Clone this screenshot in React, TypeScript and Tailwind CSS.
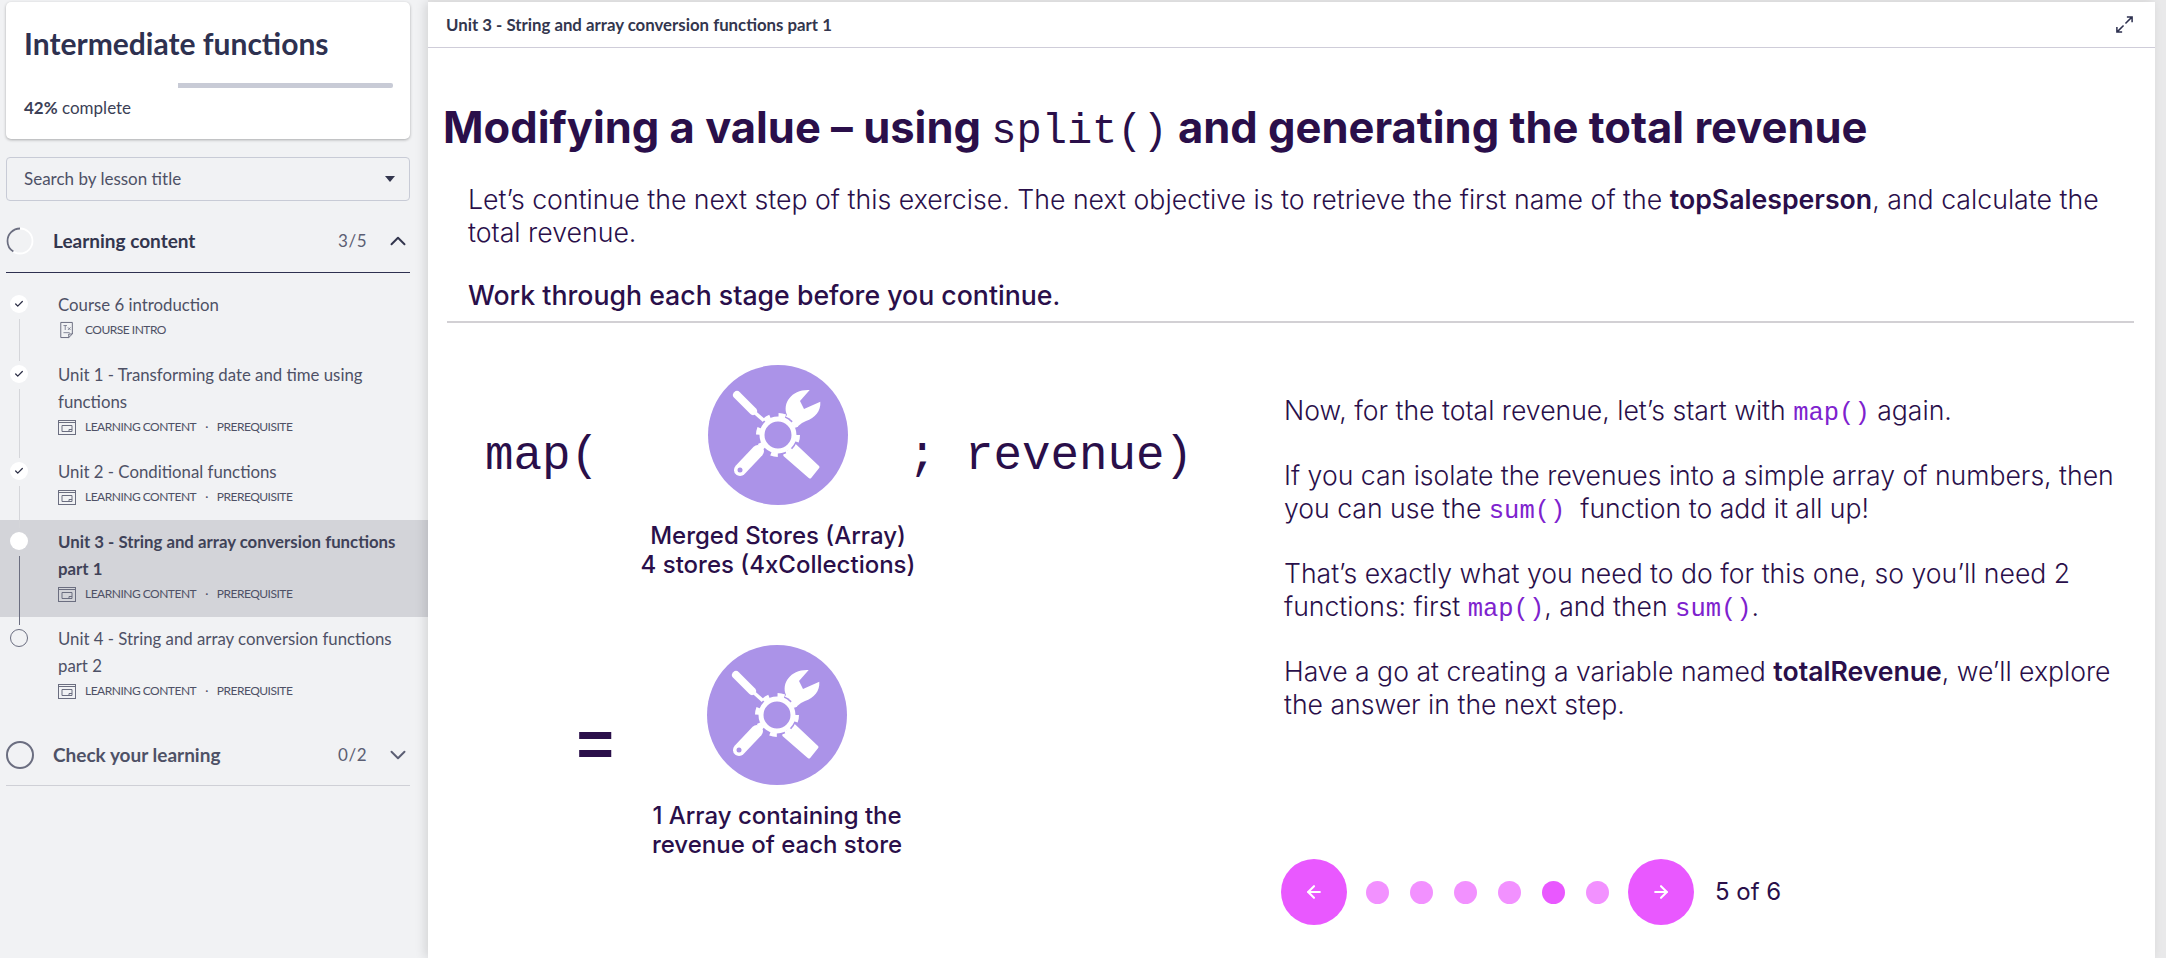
import { ArrowLeft, ArrowRight, ChevronDown, ChevronUp, Check } from "lucide-react";

const lessons = [
  { title: "Course 6 introduction", meta: "COURSE INTRO", state: "done", intro: true },
  { title: "Unit 1 - Transforming date and time using functions", meta: "LEARNING CONTENT", state: "done" },
  { title: "Unit 2 - Conditional functions", meta: "LEARNING CONTENT", state: "done" },
  { title: "Unit 3 - String and array conversion functions part 1", meta: "LEARNING CONTENT", state: "active" },
  { title: "Unit 4 - String and array conversion functions part 2", meta: "LEARNING CONTENT", state: "todo" },
];

const ToolsIcon = () => (
  <svg viewBox="0 0 140 140" className="w-[140px] h-[140px] shrink-0">
    <circle cx="70" cy="70" r="70" fill="#ab93e8" />
    {/* screwdriver */}
    <path d="M29 30 L45 46" stroke="#fff" strokeWidth="8" strokeLinecap="round" />
    <path d="M45 46 L62 61" stroke="#fff" strokeWidth="3.5" />
    {/* wrench head */}
    <path
      d="M101.7 25 L92 36 L96 44 L112.3 36.7 C113 46 107 53 98 56 L94 58 L84 66 L75 55 L79 50 C74 38 84 24 101.7 25Z"
      fill="#fff"
    />
    {/* handles */}
    <path d="M32 105 L50 86" stroke="#fff" strokeWidth="12" strokeLinecap="round" />
    <circle cx="32" cy="105" r="2.5" fill="#ab93e8" />
    <path d="M86.7 80 L110 102 L102 112 L76.7 90Z" fill="#fff" stroke="#fff" strokeWidth="3" strokeLinejoin="round" />
    {/* gear */}
    <circle cx="70" cy="70" r="20" fill="#ab93e8" />
    <circle cx="70" cy="70" r="16" fill="none" stroke="#fff" strokeWidth="5" />
    <circle cx="70" cy="70" r="20" fill="none" stroke="#fff" strokeWidth="4" strokeDasharray="7 8.7" />
  </svg>
);

const ContentIcon = ({ intro }: { intro?: boolean }) =>
  intro ? (
    <svg viewBox="0 0 18 20" className="w-[16px] h-[18px] text-[#5b5e73]" fill="none" stroke="currentColor" strokeWidth="1">
      <path d="M2 1.5h13v13l-4 4H2z" />
      <path d="M11 18.5v-4h4" />
      <path d="M5 5h4M7 5v5M10 7l3 3M13 7l-3 3M5 13h7" strokeWidth="0.8" />
    </svg>
  ) : (
    <svg viewBox="0 0 18 15" className="w-[18px] h-[15px] text-[#6b6e80]" fill="none" stroke="currentColor" strokeWidth="1">
      <rect x="0.5" y="0.5" width="17" height="14" />
      <path d="M0.5 2.5h17" />
      <path d="M4 5.5h10v6H4z" />
      <path d="M11 11.5v-2h3" />
    </svg>
  );

const LessonRow = ({ lesson, last }: { lesson: (typeof lessons)[number]; last: boolean }) => {
  const active = lesson.state === "active";
  return (
    <div className={`relative pl-[58px] pr-[8px] pt-[8px] pb-[11px] ${active ? "bg-[#d3d4d9]" : ""}`}>
      {lesson.state === "done" && (
        <span className="absolute left-[10px] top-[12px] w-[18px] h-[18px] rounded-full bg-white flex items-center justify-center">
          <Check className="w-[10px] h-[10px] text-[#2b2e45]" strokeWidth={3} />
        </span>
      )}
      {active && <span className="absolute left-[10px] top-[12px] w-[18px] h-[18px] rounded-full bg-white" />}
      {lesson.state === "todo" && (
        <span className="absolute left-[10px] top-[12px] w-[18px] h-[18px] rounded-full border border-[#6b6e80]" />
      )}
      {!last && (
        <span
          className={`absolute left-[18.5px] top-[36px] bottom-[-8px] w-px z-10 ${active ? "bg-[#6b6e80]" : "bg-[#d5d6da]"}`}
        />
      )}
      <div className={`text-[16.8px] leading-[27px] ${active ? "font-bold text-[#3f4258]" : "text-[#4e5166]"}`}>
        {lesson.title}
      </div>
      <div className="flex items-center gap-[9px] h-[24px] text-[12px] tracking-[-0.5px] text-[#4e5166]">
        <span className="w-[18px] flex justify-center">
          <ContentIcon intro={lesson.intro} />
        </span>
        <span>{lesson.meta}</span>
        {!lesson.intro && (
          <>
            <span>·</span>
            <span>PREREQUISITE</span>
          </>
        )}
      </div>
    </div>
  );
};

const Sidebar = () => (
  <aside className="w-[428px] shrink-0 h-full bg-[#f1f2f4] font-['Lato','Noto_Sans',sans-serif]">
    <div className="ml-[6px] mr-[18px] mt-[2px] h-[137px] bg-white rounded-[5px] shadow-[0_1px_3px_rgba(0,0,0,0.3)] px-[18px] pt-[22px]">
      <h1 className="text-[30px] leading-[38px] font-bold text-[#2e3150]">Intermediate functions</h1>
      <div className="mt-[21px] ml-[154px] mr-[-1px] h-[5px] bg-[#c8cbd6] rounded-r-[2px]" />
      <div className="mt-[8px] text-[17px] leading-[24px] text-[#3c3f56]">
        <span className="font-bold">42%</span> complete
      </div>
    </div>
    <div className="ml-[6px] mr-[18px] mt-[18px] h-[44px] border border-[#c8cbd6] rounded-[4px] flex items-center justify-between pl-[17px] pr-[14px] text-[17px] text-[#4e5166]">
      <span>Search by lesson title</span>
      <span className="w-0 h-0 border-x-[5px] border-x-transparent border-t-[6px] border-t-[#33364e]" />
    </div>
    <div className="ml-[6px] mr-[18px] mt-[9px] h-[63px] border-b border-[#2e3150] flex items-center text-[#33364e]">
      <svg viewBox="0 0 28 28" className="w-[28px] h-[28px] shrink-0 -rotate-90">
        <circle cx="14" cy="14" r="12.5" fill="none" stroke="#fff" strokeWidth="1.8" />
        <circle cx="14" cy="14" r="12.5" fill="none" stroke="#6b6e80" strokeWidth="1.8" strokeDasharray="33 79" strokeDashoffset="-46" />
      </svg>
      <span className="ml-[19px] text-[19px] font-bold flex-1">Learning content</span>
      <span className="text-[17px] text-[#5b5e73] mr-[18px] tracking-[0.5px]">3/5</span>
      <ChevronUp className="w-[26px] h-[26px] -mr-[1px] text-[#33364e]" strokeWidth={1.8} />
    </div>
    <div className="mt-[10px]">
      {lessons.map((lesson, i) => (
        <LessonRow key={lesson.title} lesson={lesson} last={i === lessons.length - 1} />
      ))}
    </div>
    <div className="ml-[6px] mr-[18px] mt-[11px] h-[61px] border-b border-[#cfd0d6] flex items-center text-[#4e5166]">
      <span className="w-[28px] h-[28px] shrink-0 rounded-full border-[2px] border-[#6b6e80]" />
      <span className="ml-[19px] text-[19px] font-bold flex-1">Check your learning</span>
      <span className="text-[17px] text-[#5b5e73] mr-[18px] tracking-[0.5px]">0/2</span>
      <ChevronDown className="w-[26px] h-[26px] -mr-[1px] text-[#5b5e73]" strokeWidth={1.8} />
    </div>
  </aside>
);

const Code = ({ children }: { children: string }) => (
  <code className="font-['Liberation_Mono',monospace] text-[25.5px] leading-none text-[#7e22ce]">{children}</code>
);

const Illustration = () => (
  <div className="w-[793px] shrink-0 pt-[42px]">
    <div className="flex items-start">
      <div className="w-[265px] pl-[42px] pt-[56px] font-['Liberation_Mono',monospace] text-[47.5px] leading-[70px] text-[#2a0f4a]">
        map(
      </div>
      <div className="w-[140px] flex flex-col items-center">
        <ToolsIcon />
        <p className="mt-[16px] text-center whitespace-nowrap text-[24px] leading-[29px] font-medium text-[#2a0f4a]">
          Merged Stores (Array)
          <br />4 stores (4xCollections)
        </p>
      </div>
      <div className="pl-[60px] pt-[56px] whitespace-nowrap font-['Liberation_Mono',monospace] text-[47.5px] leading-[70px] text-[#2a0f4a]">
        ; revenue)
      </div>
    </div>
    <div className="flex items-start mt-[66px]">
      <div className="w-[264px] pl-[133px] pt-[69px] font-['Liberation_Mono',monospace] font-bold text-[64px] leading-[70px] text-[#2a0f4a]">
        =
      </div>
      <div className="w-[140px] flex flex-col items-center">
        <ToolsIcon />
        <p className="mt-[16px] text-center whitespace-nowrap text-[24px] leading-[29px] font-medium text-[#2a0f4a]">
          1 Array containing the
          <br />
          revenue of each store
        </p>
      </div>
    </div>
  </div>
);

const Pager = () => (
  <div className="flex items-center mt-auto mb-[33px] -ml-[3px] text-[#2a0f4a]">
    <button className="w-[66px] h-[66px] rounded-full bg-[#e958ff] flex items-center justify-center text-white">
      <ArrowLeft className="w-[20px] h-[20px]" strokeWidth={2.5} />
    </button>
    <div className="flex items-center gap-[21px] mx-[19px]">
      {[0, 1, 2, 3, 4, 5].map((i) => (
        <span key={i} className={`w-[23px] h-[23px] rounded-full ${i === 4 ? "bg-[#e958ff]" : "bg-[#f291ff]"}`} />
      ))}
    </div>
    <button className="w-[66px] h-[66px] rounded-full bg-[#e958ff] flex items-center justify-center text-white">
      <ArrowRight className="w-[20px] h-[20px]" strokeWidth={2.5} />
    </button>
    <span className="ml-[21px] text-[24px] font-normal">5 of 6</span>
  </div>
);

const Main = () => (
  <main className="flex-1 mt-[2px] mr-[11px] bg-white shadow-[-3px_0_10px_rgba(0,0,0,0.12)] font-['Inter',sans-serif] text-[#2a0f4a] flex flex-col relative">
    <header className="h-[46px] border-b border-[#cfcdd9] flex items-center justify-between pl-[18px] pr-[21px] font-['Lato',sans-serif] text-[16.8px] font-bold text-[#33364e]">
      <span>Unit 3 - String and array conversion functions part 1</span>
      <svg viewBox="0 0 20 20" className="w-[19px] h-[19px]" fill="none" stroke="#2e3150" strokeWidth="1.6">
        <path d="M11 9l7-7M12.5 2H18v5.5M9 11l-7 7M7.5 18H2v-5.5" />
      </svg>
    </header>
    <div className="flex-1 flex flex-col min-h-0 pl-[15px] pr-[21px]">
      <h2 className="mt-[49px] text-[43.5px] leading-[60px] font-bold whitespace-nowrap">
        Modifying a value – using{" "}
        <code className="font-['Liberation_Mono',monospace] font-normal text-[42px]">split()</code> and generating the
        total revenue
      </h2>
      <p className="mt-[21px] ml-[25px] text-[26.7px] leading-[33px] font-light">
        Let’s continue the next step of this exercise. The next objective is to retrieve the first name of the{" "}
        <strong className="font-semibold">topSalesperson</strong>, and calculate the total revenue.
      </p>
      <p className="mt-[30px] ml-[25px] text-[26.7px] leading-[33px]">
        <strong className="font-medium">Work through each stage before you continue</strong>.
      </p>
      <div className="mt-[9px] ml-[4px] border-t-2 border-[#d2d0d4]" />
      <div className="flex flex-1 min-h-0">
        <Illustration />
        <div className="flex-1 pl-[48px] pt-[71px] flex flex-col text-[26.6px] leading-[33.5px] font-light">
          <p>
            Now, for the total revenue, let’s start with <Code>map()</Code> again.
          </p>
          <p className="mt-[31px]">
            If you can isolate the revenues into a simple array of numbers, then you can use the <Code>sum()</Code>
            {"\u00a0 "}function to add it all up!
          </p>
          <p className="mt-[31px]">
            That’s exactly what you need to do for this one, so you’ll need 2 functions: first <Code>map()</Code>, and
            then <Code>sum()</Code>.
          </p>
          <p className="mt-[31px]">
            Have a go at creating a variable named <strong className="font-semibold">totalRevenue</strong>, we’ll
            explore the answer in the next step.
          </p>
          <Pager />
        </div>
      </div>
    </div>
  </main>
);

export default function App() {
  return (
    <div className="w-[2166px] h-[958px] flex overflow-hidden bg-[#e9e9ea]">
      <Sidebar />
      <Main />
    </div>
  );
}
